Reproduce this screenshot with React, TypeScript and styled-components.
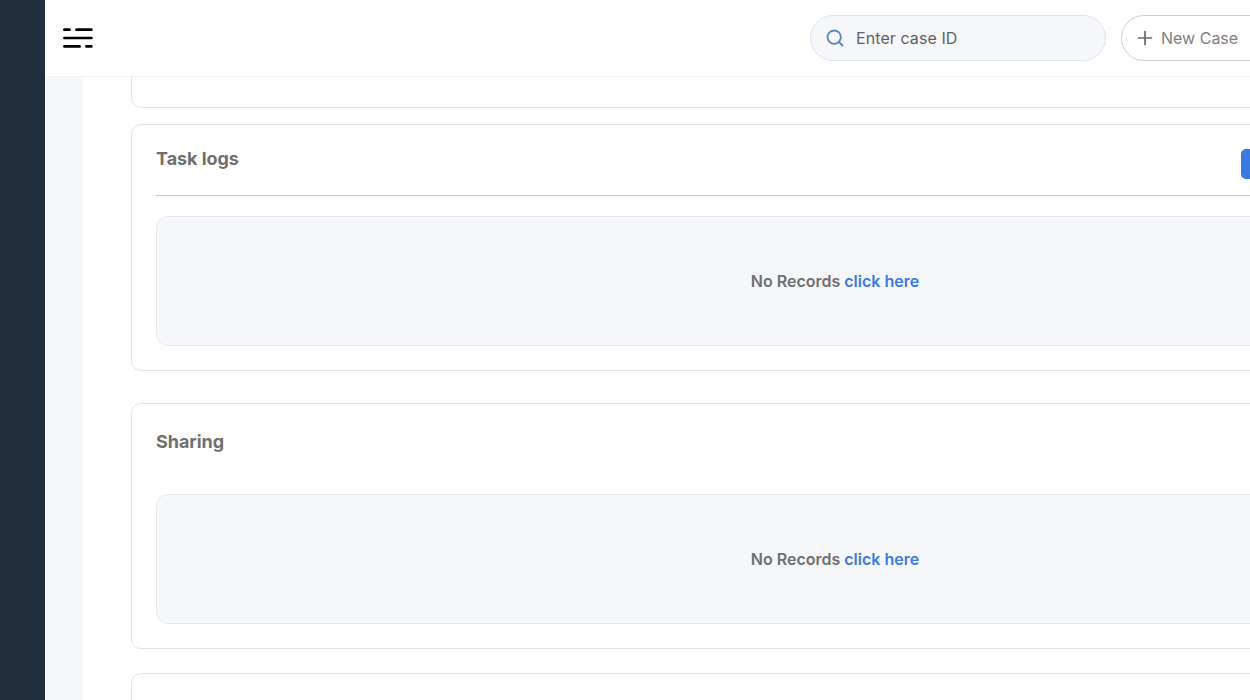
import React from 'react';
import styled, { createGlobalStyle } from 'styled-components';
import { Plus, Search } from 'lucide-react';

const GlobalStyle = createGlobalStyle`
  html, body {
    margin: 0;
    height: 100%;
    overflow: hidden;
    background: #fff;
    font-family: Inter, "Liberation Sans", sans-serif;
  }
`;

function MenuIcon() {
  return (
    <svg width="32" height="24" viewBox="0 0 32 24" fill="none" stroke="#000" strokeWidth="2.7" strokeLinecap="round">
      <path d="M2.400 3.700h5.200M14.400 3.700h15M2.400 12h27M2.400 20.400h15.200M24.400 20.400h5" />
    </svg>
  );
}

function EmptyRecords() {
  return (
    <EmptyBox>
      No Records <ClickHere href="#">click here</ClickHere>
    </EmptyBox>
  );
}

export default function App() {
  return (
    <Shell>
      <GlobalStyle />
      <Sidebar />
      <Content>
        <Header>
          <MenuIcon />
          <HeaderActions>
            <SearchBox>
              <Search size={20} color="#5b85c4" strokeWidth={2.25} />
              <SearchInput placeholder="Enter case ID" />
            </SearchBox>
            <NewCaseButton>
              <Plus size={22} color="#6b6b6b" strokeWidth={1.9} />
              New Case
            </NewCaseButton>
          </HeaderActions>
        </Header>
        <Body>
          <Gutter />
          <Main>
            <CardTail />
            <TaskCard>
              <TaskHeader>
                <CardTitle>Task logs</CardTitle>
                <BlueButton />
              </TaskHeader>
              <EmptyRecords />
            </TaskCard>
            <SharingCard>
              <SharingHeader>
                <CardTitle>Sharing</CardTitle>
              </SharingHeader>
              <EmptyRecords />
            </SharingCard>
            <NextCard />
          </Main>
        </Body>
      </Content>
    </Shell>
  );
}

const Shell = styled.div`
  display: flex;
  width: 1250px;
  height: 700px;
  overflow: hidden;
`;

const Sidebar = styled.aside`
  flex: 0 0 45px;
  background: #222e3c;
`;

const Content = styled.div`
  flex: 1;
  min-width: 0;
  display: flex;
  flex-direction: column;
`;

const Header = styled.header`
  flex: 0 0 77px;
  box-sizing: border-box;
  display: flex;
  align-items: center;
  justify-content: space-between;
  padding: 0 0 0 17px;
  background: #fff;
  border-bottom: 1px solid #f3f4f6;
`;

const HeaderActions = styled.div`
  display: flex;
  align-items: center;
  gap: 15px;
  margin-right: -34px;
`;

const SearchBox = styled.label`
  box-sizing: border-box;
  width: 296px;
  height: 46px;
  display: flex;
  align-items: center;
  gap: 11px;
  padding: 0 14px;
  background: #f5f7fb;
  border: 1px solid #dfe3ea;
  border-radius: 23px;
`;

const SearchInput = styled.input`
  flex: 1;
  min-width: 0;
  border: 0;
  outline: 0;
  padding: 0;
  background: transparent;
  font: 400 16px Inter, "Liberation Sans", sans-serif;
  letter-spacing: 0.08px;
  color: #5f6368;

  &::placeholder {
    color: #5f6368;
    opacity: 1;
  }
`;

const NewCaseButton = styled.button`
  box-sizing: border-box;
  width: 163px;
  height: 46px;
  display: flex;
  align-items: center;
  gap: 5px;
  padding: 0 12px;
  background: #fff;
  border: 1px solid #cfcfcf;
  border-radius: 23px;
  font: 400 16px Inter, "Liberation Sans", sans-serif;
  color: #808080;
`;

const Body = styled.div`
  flex: 1;
  min-height: 0;
  display: flex;
`;

const Gutter = styled.div`
  flex: 0 0 38px;
  background: #f5f7fb;
`;

const Main = styled.main`
  flex: 1;
  min-width: 0;
  padding-left: 48px;
  background: #fff;
  overflow: hidden;
`;

const Card = styled.section`
  box-sizing: border-box;
  width: 1408px;
  background: #fff;
  border: 1px solid #e3e4e8;
  border-radius: 10px;
  padding: 0 24px;
`;

const CardTail = styled(Card)`
  height: 31px;
  border-top: 0;
  border-radius: 0 0 10px 10px;
`;

const TaskCard = styled(Card)`
  height: 247px;
  margin-top: 16px;
`;

const SharingCard = styled(Card)`
  height: 246px;
  margin-top: 32px;
`;

const NextCard = styled(Card)`
  height: 120px;
  margin-top: 24px;
`;

const TaskHeader = styled.div`
  height: 71px;
  box-sizing: border-box;
  display: flex;
  align-items: flex-start;
  justify-content: space-between;
  padding-top: 24px;
  border-bottom: 1px solid #c8c8c8;
`;

const SharingHeader = styled.div`
  height: 90px;
  padding-top: 28px;
  box-sizing: border-box;
`;

const CardTitle = styled.h3`
  margin: 0;
  font-size: 18px;
  line-height: 20px;
  font-weight: 700;
  letter-spacing: -0.05px;
  color: #716f6f;
`;

const BlueButton = styled.div`
  width: 273px;
  height: 30px;
  border-radius: 5px;
  background: #3b7ae0;
`;

const EmptyBox = styled.div`
  box-sizing: border-box;
  height: 130px;
  margin-top: 20px;
  display: flex;
  align-items: center;
  justify-content: center;
  gap: 4px;
  background: #f5f7fb;
  border: 1px solid #e8e9ed;
  border-radius: 12px;
  font-size: 16px;
  font-weight: 600;
  color: #716f6f;

  ${SharingHeader} + & {
    margin-top: 0;
  }
`;

const ClickHere = styled.a`
  color: #3b7ae0;
  text-decoration: none;
`;
